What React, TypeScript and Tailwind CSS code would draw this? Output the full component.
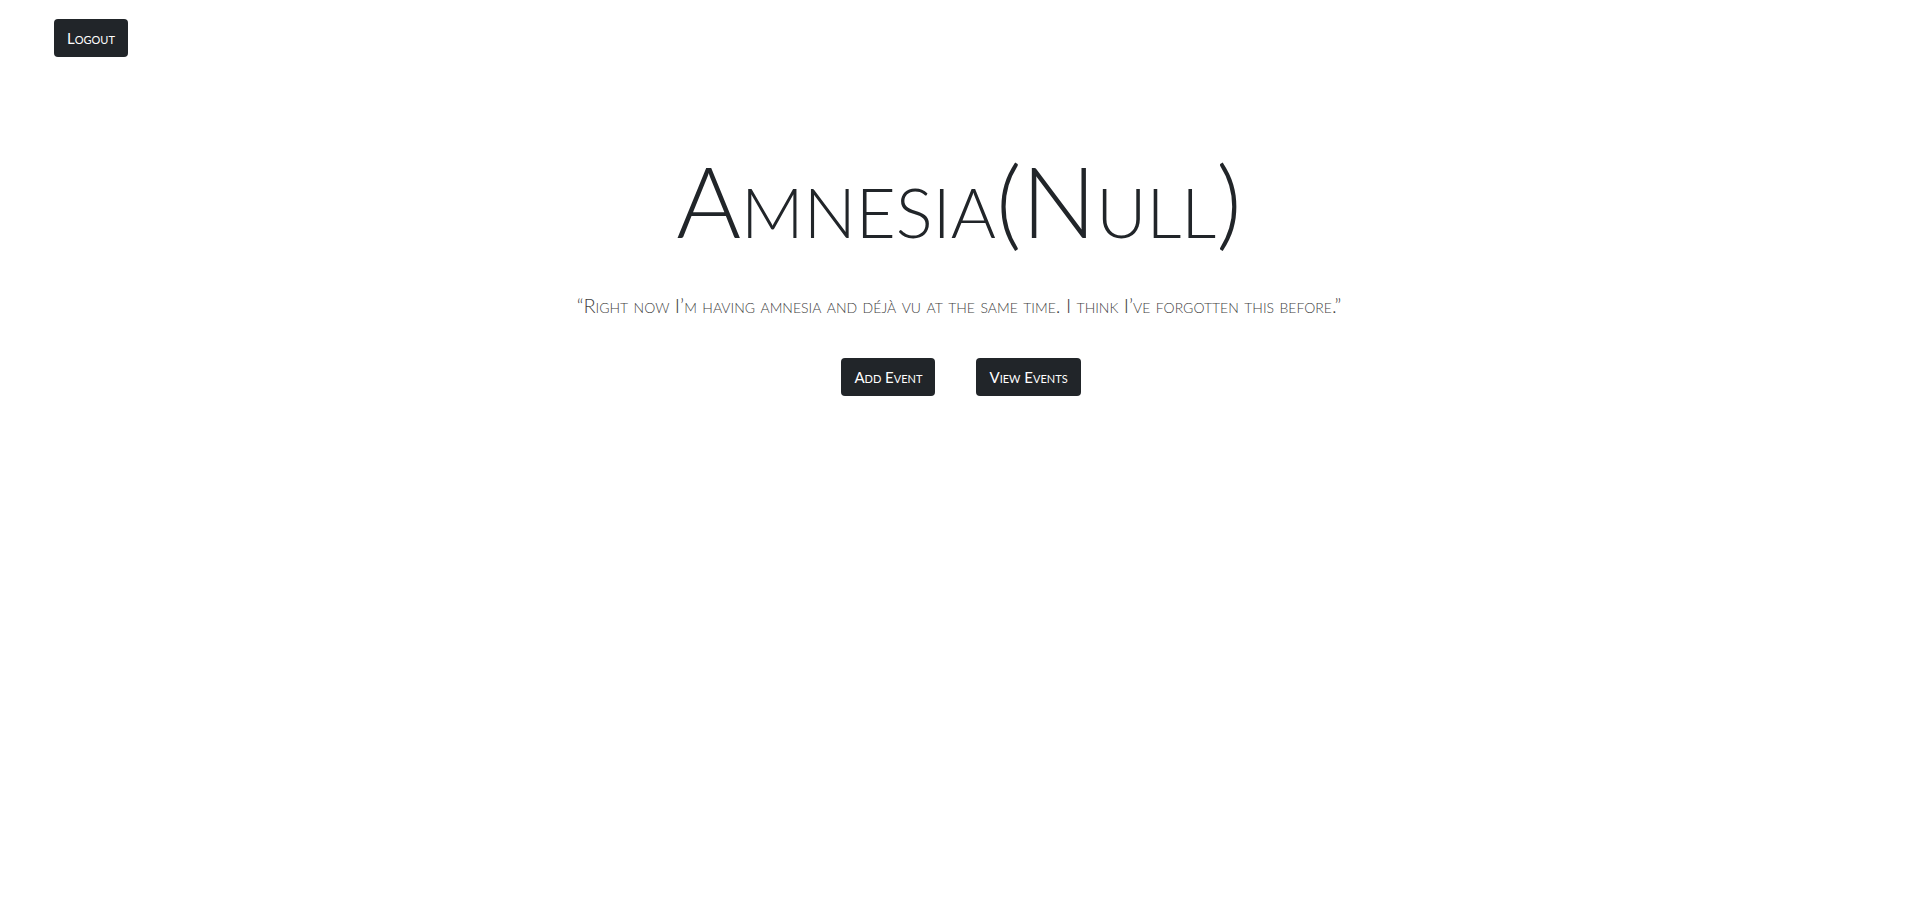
import React from "react";

const font = { fontFamily: "Lato, 'Open Sans', sans-serif" };

const App = () => {
  return (
    <div className="min-h-screen bg-white text-[#212529] [font-variant:small-caps]" style={font}>
      <div className="px-[54px] pt-[19px]">
        <button className="h-[38px] px-[13px] rounded bg-[#212529] text-white text-[15px]">
          Logout
        </button>
      </div>

      <div className="flex flex-col items-center mt-[93px] pl-[8px]">
        <h1 className="text-[99px] font-light leading-none tracking-normal">Amnesia(Null)</h1>
        <p className="mt-[41px] text-[20px] font-light text-[#3f3f3f]">
          “Right now I’m having amnesia and déjà vu at the same time. I think I’ve forgotten this before.”
        </p>
        <div className="flex gap-[41px] mt-[38px] pl-[4px]">
          <button className="h-[38px] px-[13px] rounded bg-[#212529] text-white text-[15px]">
            Add Event
          </button>
          <button className="h-[38px] px-[13px] rounded bg-[#212529] text-white text-[15px]">
            View Events
          </button>
        </div>
      </div>
    </div>
  );
};

export default App;
